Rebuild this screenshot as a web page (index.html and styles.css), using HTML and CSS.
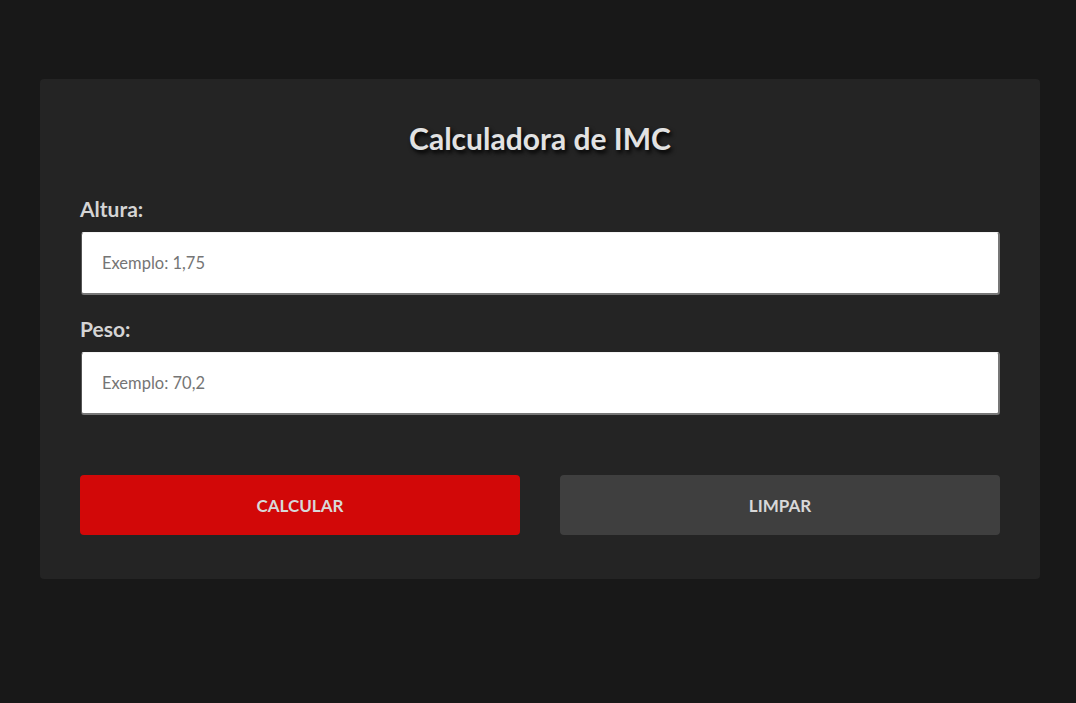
FILE: index.html
```html
<!DOCTYPE html>
<html lang="pt-BR">
<head>
<meta charset="utf-8">
<title>Calculadora de IMC</title>
<link rel="stylesheet" href="styles.css">
</head>
<body>
<main class="card">
  <h1 class="title">Calculadora de IMC</h1>
  <form class="form">
    <label class="label" for="altura">Altura:</label>
    <input class="input" id="altura" type="text" placeholder="Exemplo: 1,75">
    <label class="label" for="peso">Peso:</label>
    <input class="input" id="peso" type="text" placeholder="Exemplo: 70,2">
    <div class="actions">
      <button type="button" class="btn btn-primary">CALCULAR</button>
      <button type="reset" class="btn btn-secondary">LIMPAR</button>
    </div>
  </form>
</main>
</body>
</html>
```

FILE: styles.css
```css
html, body {
  margin: 0;
  padding: 0;
  background: #181818;
  font-family: Lato, "Noto Sans", sans-serif;
}

body {
  padding: 79px 36px 0 40px;
}

.card {
  width: 1000px;
  box-sizing: border-box;
  background: #242424;
  border-radius: 4px;
  padding: 40px 40px 44px;
}

.title {
  margin: 0 0 38px;
  text-align: center;
  color: #e2e2e2;
  font-size: 30px;
  font-weight: 700;
  line-height: 39px;
  text-shadow: 2px 3px 4px #000;
}

.form {
  display: flex;
  flex-direction: column;
}

.label {
  color: #d4d4d4;
  font-size: 21px;
  font-weight: 700;
  line-height: 25px;
  margin-bottom: 11px;
}

.input {
  height: 63px;
  box-sizing: border-box;
  margin: 0 0 21px 1px;
  padding: 0 20px;
  font-family: Lato, "Noto Sans", sans-serif;
  font-size: 16.5px;
  color: #222;
  background: #fff;
  border-style: solid;
  border-width: 1px 2px 2px 1px;
  border-color: #f4f4f4 #777 #777 #555;
  border-radius: 3px;
  outline: none;
}

.input::placeholder {
  color: #757575;
}

.actions {
  display: flex;
  gap: 40px;
  margin-top: 39px;
}

.btn {
  flex: 1;
  height: 60px;
  border: none;
  border-radius: 4px;
  font-family: Lato, "Noto Sans", sans-serif;
  font-size: 17px;
  font-weight: 700;
  color: #d8d8d8;
  cursor: pointer;
}

.btn-primary {
  background: #d20808;
}

.btn-secondary {
  background: #3f3f3f;
}
```
